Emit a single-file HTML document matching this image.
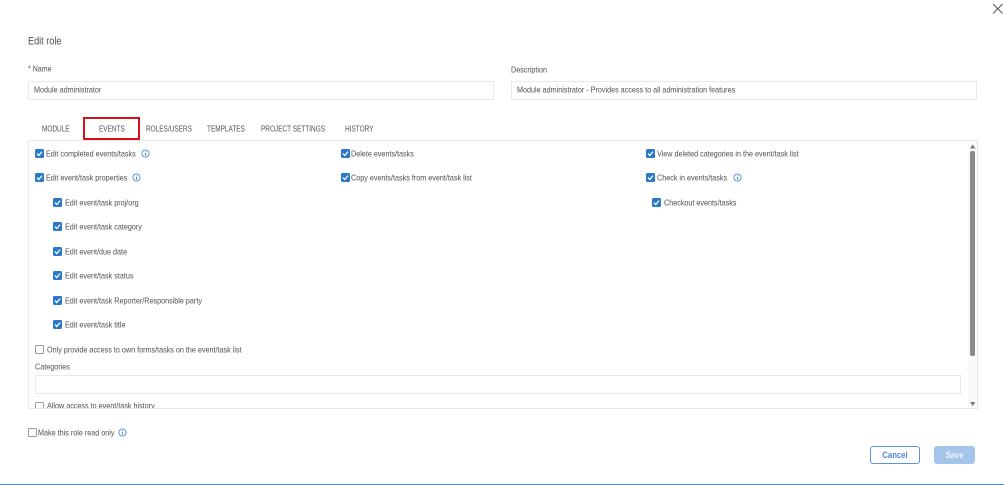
<!DOCTYPE html>
<html>
<head>
<meta charset="utf-8">
<style>
html,body{margin:0;padding:0;background:#fff}
#p{position:relative;width:1004px;height:485px;overflow:hidden;background:#fff;font-family:"Liberation Sans",sans-serif;color:#505050;font-size:8.4px}
#p div{position:absolute;white-space:nowrap}
.t{line-height:10px;height:10px;filter:blur(.25px);transform:translateY(-.4px) scaleX(.86);transform-origin:0 50%}
.t.tab{transform:translateY(-.4px) scaleX(.77)}
.t.c{transform-origin:50% 50%;transform:scaleX(.86)}
.box{border:1px solid #e9e9e9;box-sizing:border-box;background:#fff}
.cb{width:9px;height:9px;border-radius:1.5px;box-sizing:border-box}
.on{background:#2a78c8}
.off{border:1px solid #9a9a9a;background:#fff}
svg{position:absolute;overflow:visible}
</style>
</head>
<body>
<div id="p">
<svg style="left:992px;top:3px" width="11" height="11" viewBox="0 0 11 11"><path d="M1 1L10.5 10.5M10.5 1L1 10.5" stroke="#555" stroke-width="1" fill="none"/></svg>

<div class="t" style="left:28px;top:37px;font-size:10.6px">Edit role</div>
<div class="t" style="left:28px;top:65px;font-size:8.2px">* Name</div>
<div class="t" style="left:511px;top:65px">Description</div>
<div class="box" style="left:28px;top:81px;width:466px;height:19px"></div>
<div class="box" style="left:511px;top:81px;width:466px;height:19px"></div>
<div class="t" style="left:34px;top:85px">Module administrator</div>
<div class="t" style="left:517px;top:85px">Module administrator - Provides access to all administration features</div>

<div class="t tab" style="left:42px;top:124px">MODULE</div>
<div class="t tab" style="left:99px;top:124px">EVENTS</div>
<div class="t tab" style="left:146px;top:124px">ROLES/USERS</div>
<div class="t tab" style="left:207px;top:124px">TEMPLATES</div>
<div class="t tab" style="left:261px;top:124px">PROJECT SETTINGS</div>
<div class="t tab" style="left:345px;top:124px">HISTORY</div>
<div style="left:83px;top:117px;width:57px;height:23px;border:2px solid #d3131b;box-sizing:border-box"></div>

<div class="box" style="left:28px;top:140px;width:950px;height:269px"></div>
<div style="left:968px;top:141px;width:9px;height:267px;background:#fafafa"></div>
<svg style="left:969px;top:143px" width="8" height="6"><path d="M1 5.5L3.7 1.5L6.4 5.5Z" fill="#777"/></svg>
<svg style="left:969px;top:401px" width="8" height="6"><path d="M1 1L3.7 5L6.4 1Z" fill="#777"/></svg>
<div style="left:970px;top:151px;width:5px;height:205px;background:#8a8a8a;border-radius:2px"></div>

<div class="cb on" style="left:35px;top:149px"></div><svg style="left:35px;top:149px" width="9" height="9"><path d="M2 4.6L3.8 6.5L7 2.6" stroke="#fff" stroke-width="1.3" fill="none"/></svg>
<div class="t" style="left:46px;top:149px">Edit completed events/tasks</div>
<svg style="left:141px;top:149px" width="9" height="9"><circle cx="4.5" cy="4.5" r="3.6" fill="none" stroke="#3b82d0" stroke-width=".8"/><path d="M4.5 2.4V3.2M4.5 4V6.8" stroke="#3b82d0" stroke-width=".9"/></svg>

<div class="cb on" style="left:35px;top:173px"></div><svg style="left:35px;top:173px" width="9" height="9"><path d="M2 4.6L3.8 6.5L7 2.6" stroke="#fff" stroke-width="1.3" fill="none"/></svg>
<div class="t" style="left:46px;top:173px">Edit event/task properties</div>
<svg style="left:132px;top:173px" width="9" height="9"><circle cx="4.5" cy="4.5" r="3.6" fill="none" stroke="#3b82d0" stroke-width=".8"/><path d="M4.5 2.4V3.2M4.5 4V6.8" stroke="#3b82d0" stroke-width=".9"/></svg>

<div class="cb on" style="left:53px;top:198px"></div><svg style="left:53px;top:198px" width="9" height="9"><path d="M2 4.6L3.8 6.5L7 2.6" stroke="#fff" stroke-width="1.3" fill="none"/></svg>
<div class="t" style="left:65px;top:198px">Edit event/task proj/org</div>

<div class="cb on" style="left:53px;top:222px"></div><svg style="left:53px;top:222px" width="9" height="9"><path d="M2 4.6L3.8 6.5L7 2.6" stroke="#fff" stroke-width="1.3" fill="none"/></svg>
<div class="t" style="left:65px;top:222px">Edit event/task category</div>

<div class="cb on" style="left:53px;top:247px"></div><svg style="left:53px;top:247px" width="9" height="9"><path d="M2 4.6L3.8 6.5L7 2.6" stroke="#fff" stroke-width="1.3" fill="none"/></svg>
<div class="t" style="left:65px;top:247px">Edit event/due date</div>

<div class="cb on" style="left:53px;top:271px"></div><svg style="left:53px;top:271px" width="9" height="9"><path d="M2 4.6L3.8 6.5L7 2.6" stroke="#fff" stroke-width="1.3" fill="none"/></svg>
<div class="t" style="left:65px;top:271px">Edit event/task status</div>

<div class="cb on" style="left:53px;top:296px"></div><svg style="left:53px;top:296px" width="9" height="9"><path d="M2 4.6L3.8 6.5L7 2.6" stroke="#fff" stroke-width="1.3" fill="none"/></svg>
<div class="t" style="left:65px;top:296px">Edit event/task Reporter/Responsible party</div>

<div class="cb on" style="left:53px;top:320px"></div><svg style="left:53px;top:320px" width="9" height="9"><path d="M2 4.6L3.8 6.5L7 2.6" stroke="#fff" stroke-width="1.3" fill="none"/></svg>
<div class="t" style="left:65px;top:320px">Edit event/task title</div>

<div class="cb off" style="left:35px;top:345px"></div>
<div class="t" style="left:47px;top:345px">Only provide access to own forms/tasks on the event/task list</div>
<div class="t" style="left:35px;top:362px">Categories</div>
<div class="box" style="left:35px;top:375px;width:926px;height:19px"></div>

<div style="left:29px;top:400px;width:939px;height:8px;overflow:hidden">
  <div class="cb off" style="left:6px;top:2px"></div>
  <div class="t" style="left:18px;top:1px">Allow access to event/task history</div>
</div>

<div class="cb on" style="left:341px;top:149px"></div><svg style="left:341px;top:149px" width="9" height="9"><path d="M2 4.6L3.8 6.5L7 2.6" stroke="#fff" stroke-width="1.3" fill="none"/></svg>
<div class="t" style="left:351px;top:149px">Delete events/tasks</div>

<div class="cb on" style="left:341px;top:173px"></div><svg style="left:341px;top:173px" width="9" height="9"><path d="M2 4.6L3.8 6.5L7 2.6" stroke="#fff" stroke-width="1.3" fill="none"/></svg>
<div class="t" style="left:351px;top:173px">Copy events/tasks from event/task list</div>

<div class="cb on" style="left:646px;top:149px"></div><svg style="left:646px;top:149px" width="9" height="9"><path d="M2 4.6L3.8 6.5L7 2.6" stroke="#fff" stroke-width="1.3" fill="none"/></svg>
<div class="t" style="left:657px;top:149px">View deleted categories in the event/task list</div>

<div class="cb on" style="left:646px;top:173px"></div><svg style="left:646px;top:173px" width="9" height="9"><path d="M2 4.6L3.8 6.5L7 2.6" stroke="#fff" stroke-width="1.3" fill="none"/></svg>
<div class="t" style="left:657px;top:173px">Check in events/tasks</div>
<svg style="left:733px;top:173px" width="9" height="9"><circle cx="4.5" cy="4.5" r="3.6" fill="none" stroke="#3b82d0" stroke-width=".8"/><path d="M4.5 2.4V3.2M4.5 4V6.8" stroke="#3b82d0" stroke-width=".9"/></svg>

<div class="cb on" style="left:652px;top:198px"></div><svg style="left:652px;top:198px" width="9" height="9"><path d="M2 4.6L3.8 6.5L7 2.6" stroke="#fff" stroke-width="1.3" fill="none"/></svg>
<div class="t" style="left:664px;top:198px">Checkout events/tasks</div>

<div class="cb off" style="left:28px;top:428px"></div>
<div class="t" style="left:38px;top:428px">Make this role read only</div>
<svg style="left:118px;top:428px" width="9" height="9"><circle cx="4.5" cy="4.5" r="3.6" fill="none" stroke="#3b82d0" stroke-width=".8"/><path d="M4.5 2.4V3.2M4.5 4V6.8" stroke="#3b82d0" stroke-width=".9"/></svg>

<div style="left:870px;top:446px;width:50px;height:18px;border:1px solid #5b95dc;border-radius:3px;box-sizing:border-box;background:#fff"></div>
<div class="t c" style="left:870px;width:50px;text-align:center;top:450px;font-size:9px;font-weight:bold;color:#4f86cf">Cancel</div>
<div style="left:934px;top:446px;width:41px;height:18px;border-radius:3px;background:#a3c5ea"></div>
<div class="t c" style="left:934px;width:41px;text-align:center;top:450px;font-size:9px;font-weight:bold;color:#eef4fb">Save</div>

<div style="left:0;top:484px;width:1004px;height:1px;background:#4a90d9"></div>
</div>
</body>
</html>
